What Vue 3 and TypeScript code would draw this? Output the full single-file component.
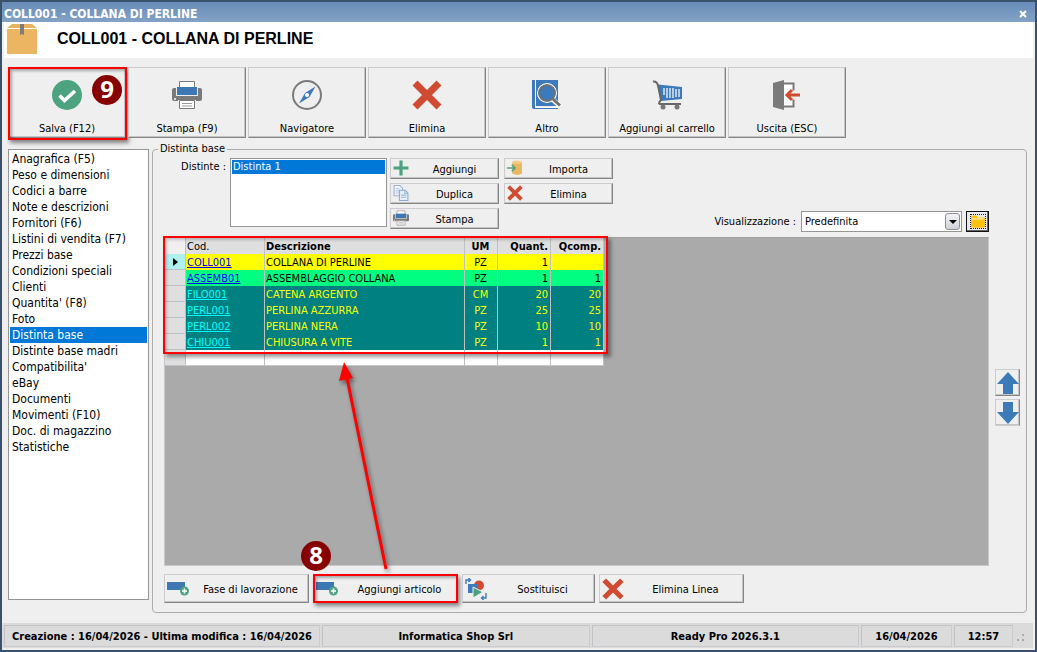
<script setup lang="ts">
import { ref } from 'vue'

interface Action { label: string; icon: string; mark?: string }
interface Row { cod: string; desc: string; um: string; quant: string; qcomp: string; tone: string }

const toolbar: Action[] = [
  { label: 'Salva (F12)', icon: 'check', mark: '9' },
  { label: 'Stampa (F9)', icon: 'printer' },
  { label: 'Navigatore', icon: 'compass' },
  { label: 'Elimina', icon: 'cross' },
  { label: 'Altro', icon: 'book' },
  { label: 'Aggiungi al carrello', icon: 'cart' },
  { label: 'Uscita (ESC)', icon: 'exit' },
]

const sections: string[] = [
  'Anagrafica (F5)', 'Peso e dimensioni', 'Codici a barre', 'Note e descrizioni', 'Fornitori (F6)',
  'Listini di vendita (F7)', 'Prezzi base', 'Condizioni speciali', 'Clienti', "Quantita' (F8)", 'Foto',
  'Distinta base', 'Distinte base madri', "Compatibilita'", 'eBay', 'Documenti', 'Movimenti (F10)',
  'Doc. di magazzino', 'Statistiche',
]
const current = ref('Distinta base')

const listActions: Action[] = [
  { label: 'Aggiungi', icon: 'plus' },
  { label: 'Importa', icon: 'import' },
  { label: 'Duplica', icon: 'copy' },
  { label: 'Elimina', icon: 'cross' },
  { label: 'Stampa', icon: 'printer' },
]

const rows: Row[] = [
  { cod: 'COLL001', desc: 'COLLANA DI PERLINE', um: 'PZ', quant: '1', qcomp: '', tone: 'yellow' },
  { cod: 'ASSEMB01', desc: 'ASSEMBLAGGIO COLLANA', um: 'PZ', quant: '1', qcomp: '1', tone: 'green' },
  { cod: 'FILO001', desc: 'CATENA ARGENTO', um: 'CM', quant: '20', qcomp: '20', tone: 'teal' },
  { cod: 'PERL001', desc: 'PERLINA AZZURRA', um: 'PZ', quant: '25', qcomp: '25', tone: 'teal' },
  { cod: 'PERL002', desc: 'PERLINA NERA', um: 'PZ', quant: '10', qcomp: '10', tone: 'teal' },
  { cod: 'CHIU001', desc: 'CHIUSURA A VITE', um: 'PZ', quant: '1', qcomp: '1', tone: 'teal' },
]

const lineActions: Action[] = [
  { label: 'Fase di lavorazione', icon: 'addrow' },
  { label: 'Aggiungi articolo', icon: 'addrow', mark: '8' },
  { label: 'Sostituisci', icon: 'swap' },
  { label: 'Elimina Linea', icon: 'cross' },
]
const view = ref('Predefinita')
</script>

<template>
  <div class="window">
    <svg class="defs" aria-hidden="true">
      <symbol id="box" viewBox="0 0 30 30">
        <path d="M5 0h20l5 4H0z" fill="#e9b45f" />
        <path d="M0 5h30v25H0z" fill="#ebb562" />
        <path d="M0 4h30v1H0z" fill="#fff" />
        <path d="M13 0h4v11l-2-1-2 1z" fill="#7c7c7c" />
      </symbol>
      <symbol id="check" viewBox="0 0 30 30">
        <circle cx="15" cy="15" r="15" fill="#4da280" />
        <path d="M7.500 15.500l5 5L23 11" fill="none" stroke="#fff" stroke-width="3.600" />
      </symbol>
      <symbol id="printer" viewBox="0 0 30 30">
        <path d="M2 8h26q2 0 2 2v9q0 2-2 2H2q-2 0-2-2v-9q0-2 2-2z" fill="#7a7a7a" />
        <path d="M4 6h22v10H4z" fill="#efefef" />
        <path d="M7.500 1.500h15V8h-15z" fill="#fff" stroke="#7a7a7a" />
        <path d="M5 7h20v8H5z" fill="#3d78b5" />
        <path d="M6 20h18v3H6z" fill="#efefef" />
        <path d="M7.500 20.500h15v8h-15z" fill="#fff" stroke="#7a7a7a" />
        <path d="M10 23.500h10M10 26h10" stroke="#999" />
        <circle cx="3" cy="19" r="1" fill="#fff" />
      </symbol>
      <symbol id="compass" viewBox="0 0 30 30">
        <circle cx="15" cy="15" r="14" fill="none" stroke="#7a7a7a" stroke-width="2" />
        <path d="M23.500 6.500l-6 10.500-10.500 6.500 6-10.500z" fill="#3d7abb" />
        <circle cx="15" cy="15" r="2" fill="#fff" />
      </symbol>
      <symbol id="cross" viewBox="0 0 30 30">
        <path d="M3 3l24 24M27 3L3 27" stroke="#d04b31" stroke-width="7" />
      </symbol>
      <symbol id="book" viewBox="0 0 30 30">
        <path d="M0 0h26v26H3v1h23v2H2q-2 0-2-2z" fill="#3d7abb" />
        <path d="M3.500 0v26M3 27.500h23" stroke="#fff" />
        <path d="M19 18l9 8" stroke="#fff" stroke-width="5" />
        <circle cx="15" cy="13" r="10" fill="#fff" />
        <circle cx="15" cy="13" r="8" fill="#3d7abb" stroke="#707070" stroke-width="2" />
        <path d="M21 19l7 6.500" stroke="#707070" stroke-width="3" />
      </symbol>
      <symbol id="cart" viewBox="0 0 30 30">
        <path d="M6 4.500L30 7v12L9 21z" fill="#3d7abb" />
        <path d="M12 8v7M15 8v10M18 8v10M21 8v10M24 9v8M27 9v8" stroke="#dce8f5" stroke-width="1.500" />
        <path d="M1 1.500q4-.5 5 4L9 20q-4 4 0 4h20" fill="none" stroke="#666" stroke-width="2" />
        <circle cx="11" cy="27" r="2.500" fill="#777" />
        <circle cx="25" cy="27" r="2.500" fill="#777" />
      </symbol>
      <symbol id="exit" viewBox="0 0 30 30">
        <path d="M12 3.500h9.500v7m0 9v7H12" fill="#fff" stroke="#7a7a7a" stroke-width="2" />
        <path d="M12 5h8v20h-8z" fill="#fff" />
        <path d="M1 3l11-3v30L1 27z" fill="#7a7a7a" />
        <path d="M28 15H16M20 10l-5 5 5 5" fill="none" stroke="#d04b31" stroke-width="3" />
      </symbol>
      <symbol id="plus" viewBox="0 0 30 30">
        <path d="M15 1v28M1 15h28" stroke="#4da280" stroke-width="6" />
      </symbol>
      <symbol id="import" viewBox="0 0 30 30">
        <path d="M10 4v22q9 4 18 0V4z" fill="#ebb562" />
        <ellipse cx="19" cy="4" rx="9" ry="3" fill="#f3cb8b" />
        <path d="M0 15h13M9 9l6 6-6 6" fill="none" stroke="#4da280" stroke-width="3" />
      </symbol>
      <symbol id="copy" viewBox="0 0 30 30">
        <path d="M2 1h11l5 5v14H2z" fill="#eef4fb" stroke="#9cb4d2" stroke-width="2" />
        <path d="M5 7h7M5 11h7M5 15h7" stroke="#b7cbe2" stroke-width="2" />
        <path d="M12 10h11l5 5v14H12z" fill="#e5eef9" stroke="#8dabce" stroke-width="2" />
        <path d="M15 19h10M15 23h10M22 10v6h6" fill="none" stroke="#9fbbdc" stroke-width="2" />
      </symbol>
      <symbol id="addrow" viewBox="0 0 22 16">
        <path d="M0 1h18v8H0z" fill="#3d78b5" />
        <circle cx="17.500" cy="10" r="4.500" fill="#4da280" />
        <path d="M17.500 7.500v5M15 10h5" stroke="#fff" stroke-width="1.600" />
      </symbol>
      <symbol id="swap" viewBox="0 0 22 22">
        <circle cx="14" cy="7.500" r="5" fill="#d04b31" />
        <path d="M3 6h9v9H3z" fill="#3d7abb" />
        <path d="M8 9l10 5-10 6z" fill="#4da280" stroke="#efefef" />
        <path d="M1 6V2h4M3.500 0l2 2-2 2M21 15v5h-4M18.500 18l-2 2 2 2" fill="none" stroke="#3d7abb" stroke-width="1.400" />
      </symbol>
      <symbol id="arrow" viewBox="0 0 22 22">
        <path d="M11 0l11 12h-6v10H6V12H0z" fill="#3d7ab8" />
      </symbol>
      <symbol id="folder" viewBox="0 0 16 14">
        <path d="M0 2q0-2 2-2h4l2 2h6q2 0 2 2v8q0 2-2 2H2q-2 0-2-2z" fill="#ffc20e" />
        <path d="M1 3h6l2-1h5v3H1z" fill="#ffe28a" />
      </symbol>
    </svg>

    <header class="titlebar">
      <span>COLL001 - COLLANA DI PERLINE</span>
      <button class="close" type="button" aria-label="Chiudi">
        <svg viewBox="0 0 8 8"><path d="M1 1l6 6M7 1L1 7" stroke="#fff" stroke-width="2" /></svg>
      </button>
    </header>
    <div class="heading">
      <svg class="icon30"><use href="#box" /></svg>
      <h1>COLL001 - COLLANA DI PERLINE</h1>
    </div>

    <nav class="toolbar">
      <button v-for="a in toolbar" :key="a.label" type="button" class="bevel tool" :class="{ framed: a.mark }">
        <svg class="icon30"><use :href="'#' + a.icon" /></svg>
        <span>{{ a.label }}</span>
        <b v-if="a.mark" class="mark mark-tool">{{ a.mark }}</b>
      </button>
    </nav>

    <main class="main">
      <nav class="sections">
        <button v-for="s in sections" :key="s" type="button" :class="{ active: s === current }" @click="current = s">{{ s }}</button>
      </nav>

      <fieldset class="group">
        <legend>Distinta base</legend>
        <div class="top">
          <span id="distinte-label" class="toplabel">Distinte :</span>
          <ul class="listbox" role="listbox" aria-labelledby="distinte-label">
            <li role="option" aria-selected="true">Distinta 1</li>
          </ul>
          <div class="listactions">
            <button v-for="a in listActions" :key="a.label" type="button" class="bevel small">
              <svg class="icon16"><use :href="'#' + a.icon" /></svg>
              <span>{{ a.label }}</span>
            </button>
          </div>
          <div class="view">
            <label for="view">Visualizzazione :</label>
            <div class="combo">
              <select id="view" v-model="view"><option>Predefinita</option></select>
              <span class="drop"><svg viewBox="0 0 8 4"><path d="M0 0h8L4 4z" /></svg></span>
            </div>
            <button type="button" class="folder" aria-label="Apri">
              <svg><use href="#folder" /></svg>
            </button>
          </div>
        </div>

        <div class="middle">
          <div class="canvas">
            <table>
              <colgroup>
                <col class="c-sel"><col class="c-cod"><col class="c-desc"><col class="c-um"><col class="c-num"><col class="c-num">
              </colgroup>
              <thead>
                <tr><th></th><th class="plain">Cod.</th><th>Descrizione</th><th class="mid">UM</th><th class="num">Quant.</th><th class="num">Qcomp.</th></tr>
              </thead>
              <tbody>
                <tr v-for="(r, i) in rows" :key="r.cod" :class="r.tone">
                  <td class="sel" :class="{ here: i === 0 }"><svg v-if="i === 0" viewBox="0 0 5 8"><path d="M0 0l5 4-5 4z" /></svg></td>
                  <td><a href="#">{{ r.cod }}</a></td>
                  <td>{{ r.desc }}</td>
                  <td class="mid">{{ r.um }}</td>
                  <td class="num">{{ r.quant }}</td>
                  <td class="num">{{ r.qcomp }}</td>
                </tr>
                <tr class="blank"><td class="sel"></td><td></td><td></td><td></td><td></td><td></td></tr>
              </tbody>
            </table>
            <div class="gridframe"></div>
            <svg class="pointer" viewBox="0 0 60 220">
              <path d="M51 211L12 20" stroke="#f00" stroke-width="3" />
              <path d="M9 4l9 16-14 3z" fill="#f00" />
            </svg>
          </div>
          <div class="movers">
            <button type="button" class="bevel" aria-label="Su"><svg><use href="#arrow" /></svg></button>
            <button type="button" class="bevel down" aria-label="Giù"><svg><use href="#arrow" /></svg></button>
          </div>
        </div>

        <div class="lineactions">
          <button v-for="a in lineActions" :key="a.label" type="button" class="bevel line" :class="[a.icon, { framed: a.mark }]">
            <svg class="icon22"><use :href="'#' + a.icon" /></svg>
            <span>{{ a.label }}</span>
            <b v-if="a.mark" class="mark mark-line">{{ a.mark }}</b>
          </button>
        </div>
      </fieldset>
    </main>

    <footer class="status">
      <span class="s1">Creazione : 16/04/2026 - Ultima modifica : 16/04/2026</span>
      <span class="s2">Informatica Shop Srl</span>
      <span class="s2">Ready Pro 2026.3.1</span>
      <span class="s3">16/04/2026</span>
      <span class="s4">12:57</span>
      <svg class="grip" viewBox="0 0 8 8"><path d="M5 0h2v2H5zM5 5h2v2H5zM0 5h2v2H0z" fill="#aaa" /></svg>
    </footer>
  </div>
</template>

<style>
body { margin: 0; background: #efefef; }
</style>

<style scoped>
* { box-sizing: border-box; }
.window {
  display: flex; flex-direction: column; min-height: 100vh;
  border: 2px solid #3b5069; border-right-color: #36536f;
  background: #efefef; color: #000;
  font: 11px/14px "DejaVu Sans Condensed", "DejaVu Sans", sans-serif;
}
button, select { font: inherit; color: inherit; }
.defs { position: absolute; width: 0; height: 0; }
.titlebar {
  display: flex; align-items: center; justify-content: space-between;
  height: 20px; padding: 3px 8px 0 2px;
  background: linear-gradient(#678cb8, #83a2c5); color: #fff; font-weight: bold; font-size: 12px;
}
.close { width: 8px; height: 8px; padding: 0; border: 0; background: none; }
.close svg { display: block; width: 8px; height: 8px; }
.heading { display: flex; height: 36px; margin: 0 2px; padding: 2px 3px; gap: 20px; background: #fff; }
.heading h1 { margin: 0; font: bold 16px/30px "Liberation Sans", Arial, sans-serif; }
.icon30 { display: block; width: 30px; height: 30px; flex: none; }
.bevel {
  position: relative; padding: 0; background: #efefef;
  border: 1px solid #cbcbd0; border-right-color: #858585; border-bottom-color: #858585;
  box-shadow: inset -1px -1px #c4c4c4;
}
.toolbar { display: flex; gap: 2px; padding: 9px 6px 0; }
.tool {
  display: flex; flex-direction: column; align-items: center; justify-content: space-between;
  width: 118px; height: 71px; padding: 12px 1px 1px;
}
.framed::after {
  content: ""; position: absolute; inset: -1px; border: 2px solid #f00;
  box-shadow: 2px 3px 4px rgba(0, 0, 0, .45), inset 2px 2px 3px rgba(0, 0, 0, .3);
}
.tool.framed::after { inset: -1px -2px -3px -1px; }
.mark {
  position: absolute; z-index: 2; width: 30px; height: 30px; border-radius: 50%;
  background: #870000; color: #fff; text-align: center;
  font: bold 24px/28px "Open Sans", "Noto Sans", sans-serif;
}
.mark-tool { right: 3px; top: 7px; }
.mark-line { left: -13px; top: -34px; }
.main { display: flex; flex: 1; gap: 3px; padding: 4px 8px 10px 6px; min-height: 0; }
.sections {
  display: flex; flex-direction: column; width: 141px; flex: none;
  margin: 7px 0 13px; padding: 1px; border: 1px solid #959595; background: #fff;
}
.sections button {
  height: 16px; padding: 0 2px; border: 0; background: none; text-align: left;
  font-size: 12px; line-height: 16px; white-space: nowrap;
}
.sections button.active { background: #0078d7; color: #fff; }
.group {
  display: flex; flex-direction: column; flex: 1; min-width: 0; margin: 0;
  padding: 2px 0 9px 11px; border: 1px solid #adadad; border-radius: 4px;
}
.group legend { margin-left: -6px; padding: 0 2px; }
.top { display: flex; align-items: flex-start; height: 74px; margin-right: 37px; }
.toplabel { width: 66px; padding: 2px 4px 0 0; text-align: right; }
.listbox {
  width: 157px; height: 69px; margin: 0 3px 0 0; padding: 1px; list-style: none;
  border: 1px solid #959595; background: #fff;
}
.listbox li { padding: 0 1px; background: #0078d7; color: #fff; }
.listactions { display: grid; grid-template-columns: 109px 109px; gap: 4px 5px; }
.small { display: flex; align-items: center; height: 21px; padding: 0 0 0 2px; }
.small span { flex: 1; text-align: center; padding: 3px 0 0 2px; }
.icon16 { width: 16px; height: 16px; margin-top: -2px; }
.view { display: flex; align-items: center; align-self: flex-end; gap: 4px; margin-left: auto; }
.combo { position: relative; width: 161px; height: 21px; margin-left: 1px; }
.combo select {
  appearance: none; width: 100%; height: 100%; padding: 0 3px;
  border: 1px solid #959595; border-radius: 0; background: #fff;
}
.drop {
  position: absolute; right: 2px; top: 2px; width: 15px; height: 17px; pointer-events: none;
  display: flex; align-items: center; justify-content: center;
  border: 1px solid #8a8f99; border-radius: 3px; background: linear-gradient(#f5f5f7, #cfd0d8);
}
.drop svg { width: 8px; height: 4px; }
.folder {
  display: flex; align-items: center; justify-content: center; width: 23px; height: 21px; padding: 0;
  border: 1px solid #111; background: #e8e8ee; box-shadow: inset -1px -1px #666;
}
.folder svg { width: 16px; height: 15px; border: 1px dotted #222; }
.middle { display: flex; flex: 1; margin-top: 5px; }
.canvas { position: relative; flex: 1; border: 1px solid #c8c8cc; border-top-color: #a0a0a0; background: #aaa; }
table { width: 439px; table-layout: fixed; border-collapse: separate; border-spacing: 0; }
.c-sel { width: 21px; }
.c-cod { width: 79px; }
.c-desc { width: 200px; }
.c-um { width: 33px; }
.c-num { width: 53px; }
th, td { height: 16px; padding: 0 2px 0 1px; line-height: 15px; white-space: nowrap; text-align: left; border-right: 1px solid #c0c0c0; }
th { background: #dfdfdf; }
th:first-child { background: #f0f0f0; }
th.plain { font-weight: normal; }
th.mid, td.mid { text-align: center; }
th.num, td.num { text-align: right; }
td a { color: inherit; }
.yellow td { background: #ff0; }
.green td { background: #00ff80; }
.teal td { background: #008080; color: #ff0; }
.yellow a, .green a { color: #00f; }
.teal a { color: #0ff; }
.blank td { background: #fff; border-bottom: 1px solid #c8c8cc; }
tr .sel { background: #dfdfdf; border-bottom: 1px solid #c0c0c8; }
tr .sel.here { background: #b0f0f0; }
.sel svg { display: block; width: 5px; height: 8px; margin-left: 7px; }
.gridframe {
  position: absolute; left: -2px; top: -2px; width: 445px; height: 118px; border: 2px solid #f00;
  box-shadow: 3px 3px 4px rgba(0, 0, 0, .4), inset 2px 2px 3px rgba(0, 0, 0, .2);
}
.pointer {
  position: absolute; z-index: 1; left: 170px; top: 120px; width: 60px; height: 220px; fill: none;
  filter: drop-shadow(2px 3px 2px rgba(0, 0, 0, .45));
}
.movers {
  display: flex; flex-direction: column; justify-content: center; align-items: center;
  gap: 3px; width: 37px; padding-bottom: 8px;
}
.movers button { width: 25px; height: 27px; }
.movers svg { display: block; width: 22px; height: 22px; margin: 0 auto; }
.movers .down { border-bottom-color: #cbcbd0; }
.movers .down svg { transform: rotate(180deg); }
.lineactions { display: flex; gap: 4px; margin-top: 8px; }
.line { display: flex; align-items: center; width: 145px; height: 29px; padding: 0 2px; }
.line.swap { width: 133px; }
.line span { flex: 1; padding: 3px 0 0 6px; text-align: center; }
.icon22 { width: 22px; height: 22px; }
.addrow .icon22 { height: 16px; }
.status {
  display: flex; gap: 2px; height: 25px; margin: 0 2px 2px 0; padding: 2px 0 1px 2px;
  background: #dbdbdb; font-weight: bold;
}
.status span {
  border: 1px solid #c2c2c4; border-right-color: #cacad0; border-bottom-color: #cacad0;
  line-height: 21px; text-align: center; white-space: nowrap; overflow: hidden;
}
.s1 { width: 316px; }
.s2 { flex: 1; }
.s3 { width: 91px; }
.s4 { width: 59px; }
.grip { align-self: flex-end; width: 8px; height: 8px; margin: 0 8px 5px 2px; }
</style>
